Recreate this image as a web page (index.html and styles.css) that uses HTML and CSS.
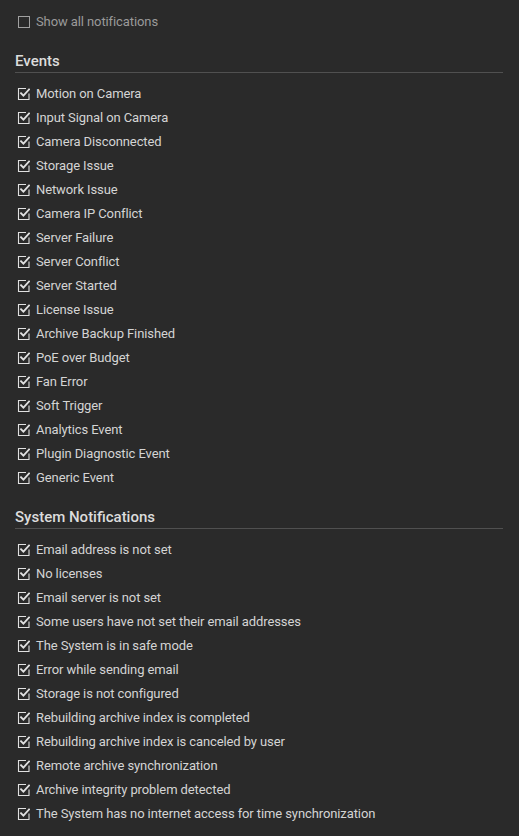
FILE: index.html
```html
<!DOCTYPE html>
<html>
<head>
<meta charset="utf-8">
<link rel="stylesheet" href="styles.css">
</head>
<body>
<div class="page">
  <label class="row muted">
    <svg class="box" viewBox="0 0 14 14" width="14" height="14"><rect x="2.5" y="2.5" width="11" height="11" fill="none" stroke="currentColor" stroke-width="1"/></svg>
    <span>Show all notifications</span>
  </label>

  <section class="section">
    <h2 class="head">Events</h2>
    <ul class="list" id="events"></ul>
  </section>

  <section class="section">
    <h2 class="head">System Notifications</h2>
    <ul class="list" id="system"></ul>
  </section>
</div>
<script>
const check = '<svg class="box" viewBox="0 0 14 14" width="14" height="14"><path d="M13 7.5V13.5H2.5V2.5H10" fill="none" stroke="currentColor" stroke-width="1.1"/><path d="M5 7.2L7.4 9.6L13 3.4" fill="none" stroke="currentColor" stroke-width="1.8" stroke-linecap="square"/></svg>';
const ev = ["Motion on Camera","Input Signal on Camera","Camera Disconnected","Storage Issue","Network Issue","Camera IP Conflict","Server Failure","Server Conflict","Server Started","License Issue","Archive Backup Finished","PoE over Budget","Fan Error","Soft Trigger","Analytics Event","Plugin Diagnostic Event","Generic Event"];
const sys = ["Email address is not set","No licenses","Email server is not set","Some users have not set their email addresses","The System is in safe mode","Error while sending email","Storage is not configured","Rebuilding archive index is completed","Rebuilding archive index is canceled by user","Remote archive synchronization","Archive integrity problem detected","The System has no internet access for time synchronization"];
function fill(id, arr){
  document.getElementById(id).innerHTML = arr.map(t => '<li class="row">' + check + '<span>' + t + '</span></li>').join('');
}
fill('events', ev); fill('system', sys);
</script>
</body>
</html>
```

FILE: styles.css
```css
html, body {
  margin: 0;
  padding: 0;
  background: #2a2a2a;
}
.page {
  padding: 9px 16px 0 15px;
  font-family: Roboto, "Liberation Sans", sans-serif;
  color: #d4d4d4;
}
.row {
  display: flex;
  align-items: center;
  height: 24px;
  font-size: 13px;
  letter-spacing: -0.1px;
  padding-left: 1px;
  gap: 6px;
}
.row .box {
  flex: none;
  color: #e0e0e0;
}
.muted {
  color: #9a9a9a;
}
.muted .box {
  color: #a0a0a0;
}
.section {
  margin-top: 19px;
}
.head {
  margin: 0;
  font-size: 15px;
  font-weight: 500;
  line-height: 18px;
  padding-bottom: 2px;
  border-bottom: 1px solid #505050;
  color: #dcdcdc;
}
.list {
  list-style: none;
  margin: 8px 0 0;
  padding: 0;
}
```
